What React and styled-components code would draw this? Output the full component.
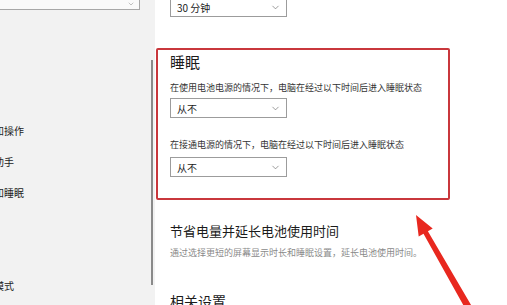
import React from "react"
import styled, { createGlobalStyle } from "styled-components"
import { ChevronDown } from "lucide-react"

const Global = createGlobalStyle`
  body {
    margin: 0;
    overflow: hidden;
    background: #fff;
    font-family: "Noto Sans CJK SC", "Noto Sans", sans-serif;
  }
`

const Page = styled.div`
  display: flex;
  width: 507px;
  height: 305px;
  overflow: hidden;
  position: relative;
`

const Sidebar = styled.div`
  width: 155px;
  flex-shrink: 0;
  display: flex;
  background: #f2f2f2;
`

const SideInner = styled.div`
  flex: 1;
  display: flex;
  flex-direction: column;
  overflow: hidden;
`

const SearchBox = styled.div`
  flex-shrink: 0;
  height: 26px;
  margin: -19px 11px 0 -10px;
  border: 1px solid #a8a8a8;
  background: #fafafa;
  display: flex;
  align-items: flex-end;
  justify-content: flex-end;
  padding: 0 4px 1px 0;
  color: #888;
`

const NavList = styled.div`
  margin-top: 43px;
  display: flex;
  flex-direction: column;
  flex-shrink: 0;
`

const NavItem = styled.div`
  height: 31px;
  line-height: 31px;
  margin-left: -26px;
  font-size: 10px;
  color: #222;
  white-space: nowrap;
`

const ScrollThumb = styled.div`
  width: 2px;
  height: 225px;
  margin: 60px 2px 0 0;
  background: #8a8a8a;
`

const Main = styled.div`
  flex: 1;
  display: flex;
  flex-direction: column;
  overflow: hidden;

  & > * {
    flex-shrink: 0;
  }
`

const Select = styled.div`
  flex-shrink: 0;
  width: 117px;
  height: 20px;
  box-sizing: border-box;
  border: 1px solid #9c9c9c;
  display: flex;
  align-items: center;
  justify-content: space-between;
  padding: 0 5px 0 6px;
  font-size: 10px;
  color: #222;
  margin-top: ${p => p.$top || 0}px;
  margin-left: ${p => p.$left || 0}px;
`

const RedBox = styled.div`
  margin: 31px 0 0 1px;
  width: 294px;
  height: 152px;
  box-sizing: border-box;
  border: 2px solid #c9373c;
  border-radius: 2px;
  padding: 2px 0 0 12px;
  display: flex;
  flex-direction: column;
`

const Title = styled.div`
  font-size: 15px;
  line-height: 20px;
  color: #1b1b1b;
`

const Label = styled.div`
  font-size: 9px;
  line-height: 12px;
  color: #333;
  white-space: nowrap;
  margin-top: ${p => p.$top}px;
`

const SectionTitle = styled.div`
  margin: ${p => p.$top}px 0 0 15px;
  font-size: ${p => p.$size}px;
  line-height: ${p => p.$size + 6}px;
  color: #1b1b1b;
  white-space: nowrap;
`

const Desc = styled.div`
  margin: 7px 0 0 15px;
  font-size: 9px;
  line-height: 12px;
  color: #8a8a8a;
  white-space: nowrap;
`

const Arrow = styled.svg`
  position: absolute;
  left: 0;
  top: 0;
  width: 507px;
  height: 305px;
  pointer-events: none;
`

const navItems = ["显示", "声音", "通知和操作", "专注助手", "电源和睡眠", "电池", "存储", "平板模式"]

const Dropdown = ({ value, top, left }) => (
  <Select $top={top} $left={left}>
    <span>{value}</span>
    <ChevronDown size={11} strokeWidth={1.4} color="#666" />
  </Select>
)

export default function App() {
  return (
    <Page>
      <Global />
      <Sidebar>
        <SideInner>
          <SearchBox>
            <ChevronDown size={8} strokeWidth={1.5} />
          </SearchBox>
          <NavList>
            {navItems.map(t => (
              <NavItem key={t}>{t}</NavItem>
            ))}
          </NavList>
        </SideInner>
        <ScrollThumb />
      </Sidebar>
      <Main>
        <Dropdown value="30 分钟" top={-3} left={15} />
        <RedBox>
          <Title>睡眠</Title>
          <Label $top={10}>在使用电池电源的情况下，电脑在经过以下时间后进入睡眠状态</Label>
          <Dropdown value="从不" top={4} />
          <Label $top={21}>在接通电源的情况下，电脑在经过以下时间后进入睡眠状态</Label>
          <Dropdown value="从不" top={6} />
        </RedBox>
        <SectionTitle $top={21} $size={13}>节省电量并延长电池使用时间</SectionTitle>
        <Desc>通过选择更短的屏幕显示时长和睡眠设置，延长电池使用时间。</Desc>
        <SectionTitle $top={32} $size={14}>相关设置</SectionTitle>
      </Main>
      <Arrow viewBox="0 0 507 305">
        <polygon
          points="416,215 432.7,228.6 427.9,231.3 473,308.3 467,311.7 423.5,233.7 418.7,236.4"
          fill="#e8281f"
        />
      </Arrow>
    </Page>
  )
}
